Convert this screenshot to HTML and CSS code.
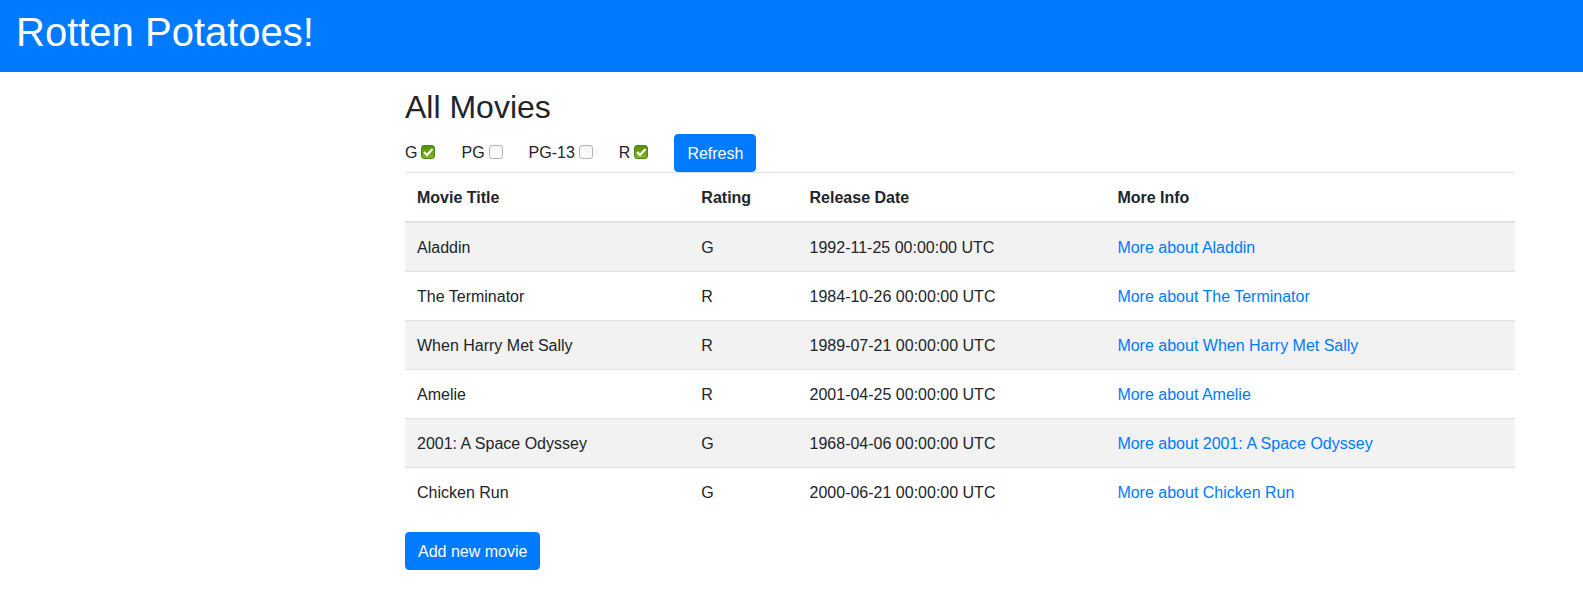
FILE: index.html
```html
<!DOCTYPE html>
<html lang="en">
<head>
<meta charset="utf-8">
<meta name="viewport" content="width=device-width, initial-scale=1">
<title>Rotten Potatoes!</title>
<link rel="stylesheet" href="styles.css">
</head>
<body>
<header class="banner"><h1 class="banner-title">Rotten Potatoes!</h1></header>
<div class="page">
<main class="content">
<h2 class="heading">All Movies</h2>
<form class="filters">
<span class="filter"><label for="g">G</label><input class="check" type="checkbox" id="g" checked></span>
<span class="filter"><label for="pg">PG</label><input class="check" type="checkbox" id="pg"></span>
<span class="filter"><label for="pg13">PG-13</label><input class="check" type="checkbox" id="pg13"></span>
<span class="filter"><label for="r">R</label><input class="check" type="checkbox" id="r" checked></span>
<button class="btn" type="button">Refresh</button>
</form>
<table class="movies">
<thead><tr><th>Movie Title</th><th>Rating</th><th>Release Date</th><th>More Info</th></tr></thead>
<tbody>
<tr><td>Aladdin</td><td>G</td><td>1992-11-25 00:00:00 UTC</td><td><a href="#">More about Aladdin</a></td></tr>
<tr><td>The Terminator</td><td>R</td><td>1984-10-26 00:00:00 UTC</td><td><a href="#">More about The Terminator</a></td></tr>
<tr><td>When Harry Met Sally</td><td>R</td><td>1989-07-21 00:00:00 UTC</td><td><a href="#">More about When Harry Met Sally</a></td></tr>
<tr><td>Amelie</td><td>R</td><td>2001-04-25 00:00:00 UTC</td><td><a href="#">More about Amelie</a></td></tr>
<tr><td>2001: A Space Odyssey</td><td>G</td><td>1968-04-06 00:00:00 UTC</td><td><a href="#">More about 2001: A Space Odyssey</a></td></tr>
<tr><td>Chicken Run</td><td>G</td><td>2000-06-21 00:00:00 UTC</td><td><a href="#">More about Chicken Run</a></td></tr>
</tbody>
</table>
<a class="btn" href="#">Add new movie</a>
</main>
</div>
</body>
</html>
```
FILE: styles.css
```css
*, *::before, *::after { box-sizing: border-box; }
body { margin: 0; background: #fff; color: #212529; font: 16px/24px "Liberation Sans", Arial, sans-serif; }
.banner { padding: 8px 16px 16px; background: #007bff; color: #fff; }
.banner-title { margin: 0; font-size: 40px; font-weight: 400; line-height: 48px; }
.page { display: grid; grid-template-columns: 27fr 74fr; padding: 16px 68px 16px 0; }
.content { grid-column: 2; }
.heading { margin: 0 0 8px; font-size: 32px; font-weight: 400; line-height: 38px; }
.filters { display: flex; flex-wrap: wrap; align-items: center; column-gap: 26px; }
.filter { display: flex; align-items: center; }
.check { appearance: none; width: 14px; height: 14px; margin: 0 0 2px 4px; border: 1px solid #b4b4b4; border-radius: 3px; background: linear-gradient(#f4f4f4, #fff); }
.check:checked { border-color: #4a8a0c; background: url("data:image/svg+xml,%3Csvg xmlns='http://www.w3.org/2000/svg' viewBox='0 0 12 12'%3E%3Cpath d='M2 6l3 3 5.5-6' fill='none' stroke='white' stroke-width='2.2'/%3E%3C/svg%3E") center / 12px 12px no-repeat, linear-gradient(#539000, #82b52a); }
.btn { display: inline-block; padding: 7px 12px 5px; border: 1px solid #007bff; border-radius: 4px; background: #007bff; color: #fff; font: inherit; text-decoration: none; }
.movies { width: 100%; margin-bottom: 16px; border-collapse: collapse; }
.movies th, .movies td { padding: 13px 12px 11px; border-top: 1px solid #dee2e6; text-align: left; }
.movies thead th { border-bottom: 2px solid #dee2e6; }
.movies tbody tr:nth-child(odd) { background: #f2f2f2; }
.movies a { color: #007bff; text-decoration: none; }
```
